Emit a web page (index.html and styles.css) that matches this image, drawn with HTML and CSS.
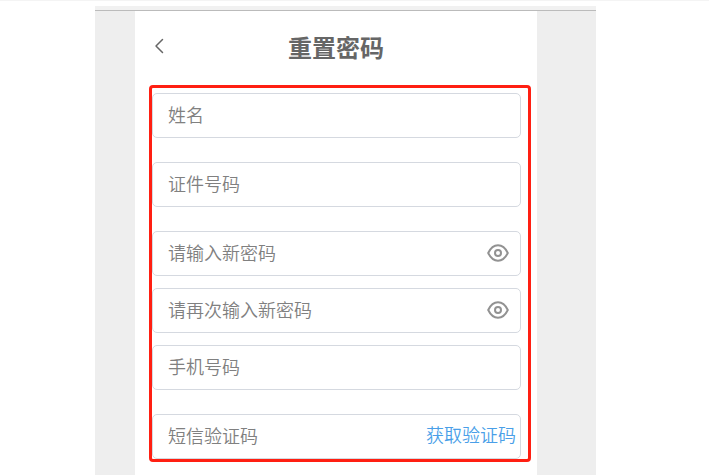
FILE: index.html
```html
<!DOCTYPE html>
<html lang="zh-CN">
<head>
    <meta charset="UTF-8">
    <meta name="viewport" content="width=device-width, initial-scale=1.0">
    <title>重置密码</title>
    <link rel="stylesheet" href="styles.css">
</head>
<body>
    <div class="stage">
        <main class="phone">
            <header class="nav-bar">
                <button type="button" class="back" aria-label="返回">
                    <svg width="10" height="16" viewBox="0 0 10 16"><path d="M8.5 1.5 2 8l6.5 6.5"/></svg>
                </button>
                <h1>重置密码</h1>
            </header>

            <form class="reset-form">
                <div class="field">
                    <input type="text" id="name" placeholder="姓名" aria-label="姓名">
                </div>
                <div class="field">
                    <input type="text" id="idNumber" placeholder="证件号码" aria-label="证件号码">
                </div>
                <div class="field-group">
                    <div class="field">
                        <input type="password" id="password" placeholder="请输入新密码" aria-label="请输入新密码">
                        <button type="button" class="eye" aria-label="显示密码">
                            <svg width="22" height="18" viewBox="0 0 22 18"><path d="M1.2 9C3.6 4 7 1.3 11 1.3S18.4 4 20.8 9C18.4 14 15 16.7 11 16.7S3.6 14 1.2 9Z"/><circle cx="11" cy="9" r="3"/></svg>
                        </button>
                    </div>
                    <div class="field">
                        <input type="password" id="confirmPassword" placeholder="请再次输入新密码" aria-label="请再次输入新密码">
                        <button type="button" class="eye" aria-label="显示密码">
                            <svg width="22" height="18" viewBox="0 0 22 18"><path d="M1.2 9C3.6 4 7 1.3 11 1.3S18.4 4 20.8 9C18.4 14 15 16.7 11 16.7S3.6 14 1.2 9Z"/><circle cx="11" cy="9" r="3"/></svg>
                        </button>
                    </div>
                    <div class="field">
                        <input type="tel" id="phone" placeholder="手机号码" aria-label="手机号码">
                    </div>
                </div>
                <div class="field">
                    <input type="text" id="smsCode" placeholder="短信验证码" aria-label="短信验证码">
                    <button type="button" class="get-code">获取验证码</button>
                </div>
            </form>
        </main>
    </div>
</body>
</html>
```

FILE: styles.css
```css
*,
*::before {
    box-sizing: border-box;
}
body {
    margin: 0;
    padding: 5px 113px 0 95px;
    border-top: 1px solid #f4f4f4;
    background: #fff;
    font-family: "Noto Sans CJK SC", sans-serif;
}
.stage {
    display: flex;
    flex-direction: column;
    min-height: calc(100vh - 6px);
    padding: 0 59px 0 40px;
    background: #eee;
}
/* toolbar edge above the page */
.stage::before {
    content: "";
    height: 5px;
    margin: 0 -59px 0 -40px;
    background: #f1f1f1;
    border-bottom: 1px solid #bbb;
}
.phone {
    flex: 1;
    padding: 0 6px 12px 14px;
    background: #fff;
}
.nav-bar {
    display: grid;
    grid-template-columns: 24px 1fr 32px;
    align-items: center;
    height: 74px;
}
.nav-bar h1 {
    margin: 0;
    padding-bottom: 2px;
    font-size: 24px;
    line-height: 32px;
    text-align: center;
    color: #666;
}
button {
    padding: 0;
    border: none;
    background: none;
    font-family: inherit;
    cursor: pointer;
}
svg {
    display: block;
    fill: none;
    stroke-linecap: round;
    stroke-linejoin: round;
}
.back {
    padding: 0 0 4px 5px;
}
.back svg {
    stroke: #666;
    stroke-width: 1.5;
}
.reset-form {
    display: flex;
    flex-direction: column;
    gap: 24px;
    padding: 5px 7px 0 0;
    border: 3px solid #ff1f12;
    border-radius: 4px;
}
.field-group {
    display: flex;
    flex-direction: column;
    gap: 12px;
}
.field {
    display: flex;
    align-items: center;
    height: 45px;
    border: 1px solid #d5d9e0;
    border-radius: 5px;
    background: #fff;
}
.field input {
    flex: 1;
    min-width: 0;
    height: 100%;
    padding: 0 15px 4px;
    border: none;
    outline: none;
    background: none;
    font-family: inherit;
    font-size: 18px;
    font-weight: 350;
    color: #333;
}
.field input::placeholder {
    color: #808080;
}
.eye {
    padding: 0 11px 2px 0;
}
.eye svg {
    stroke: #929292;
    stroke-width: 2;
}
.get-code {
    padding: 0 4px 6px 0;
    font-size: 18px;
    font-weight: 350;
    line-height: 24px;
    color: #4a9fe8;
}
```
